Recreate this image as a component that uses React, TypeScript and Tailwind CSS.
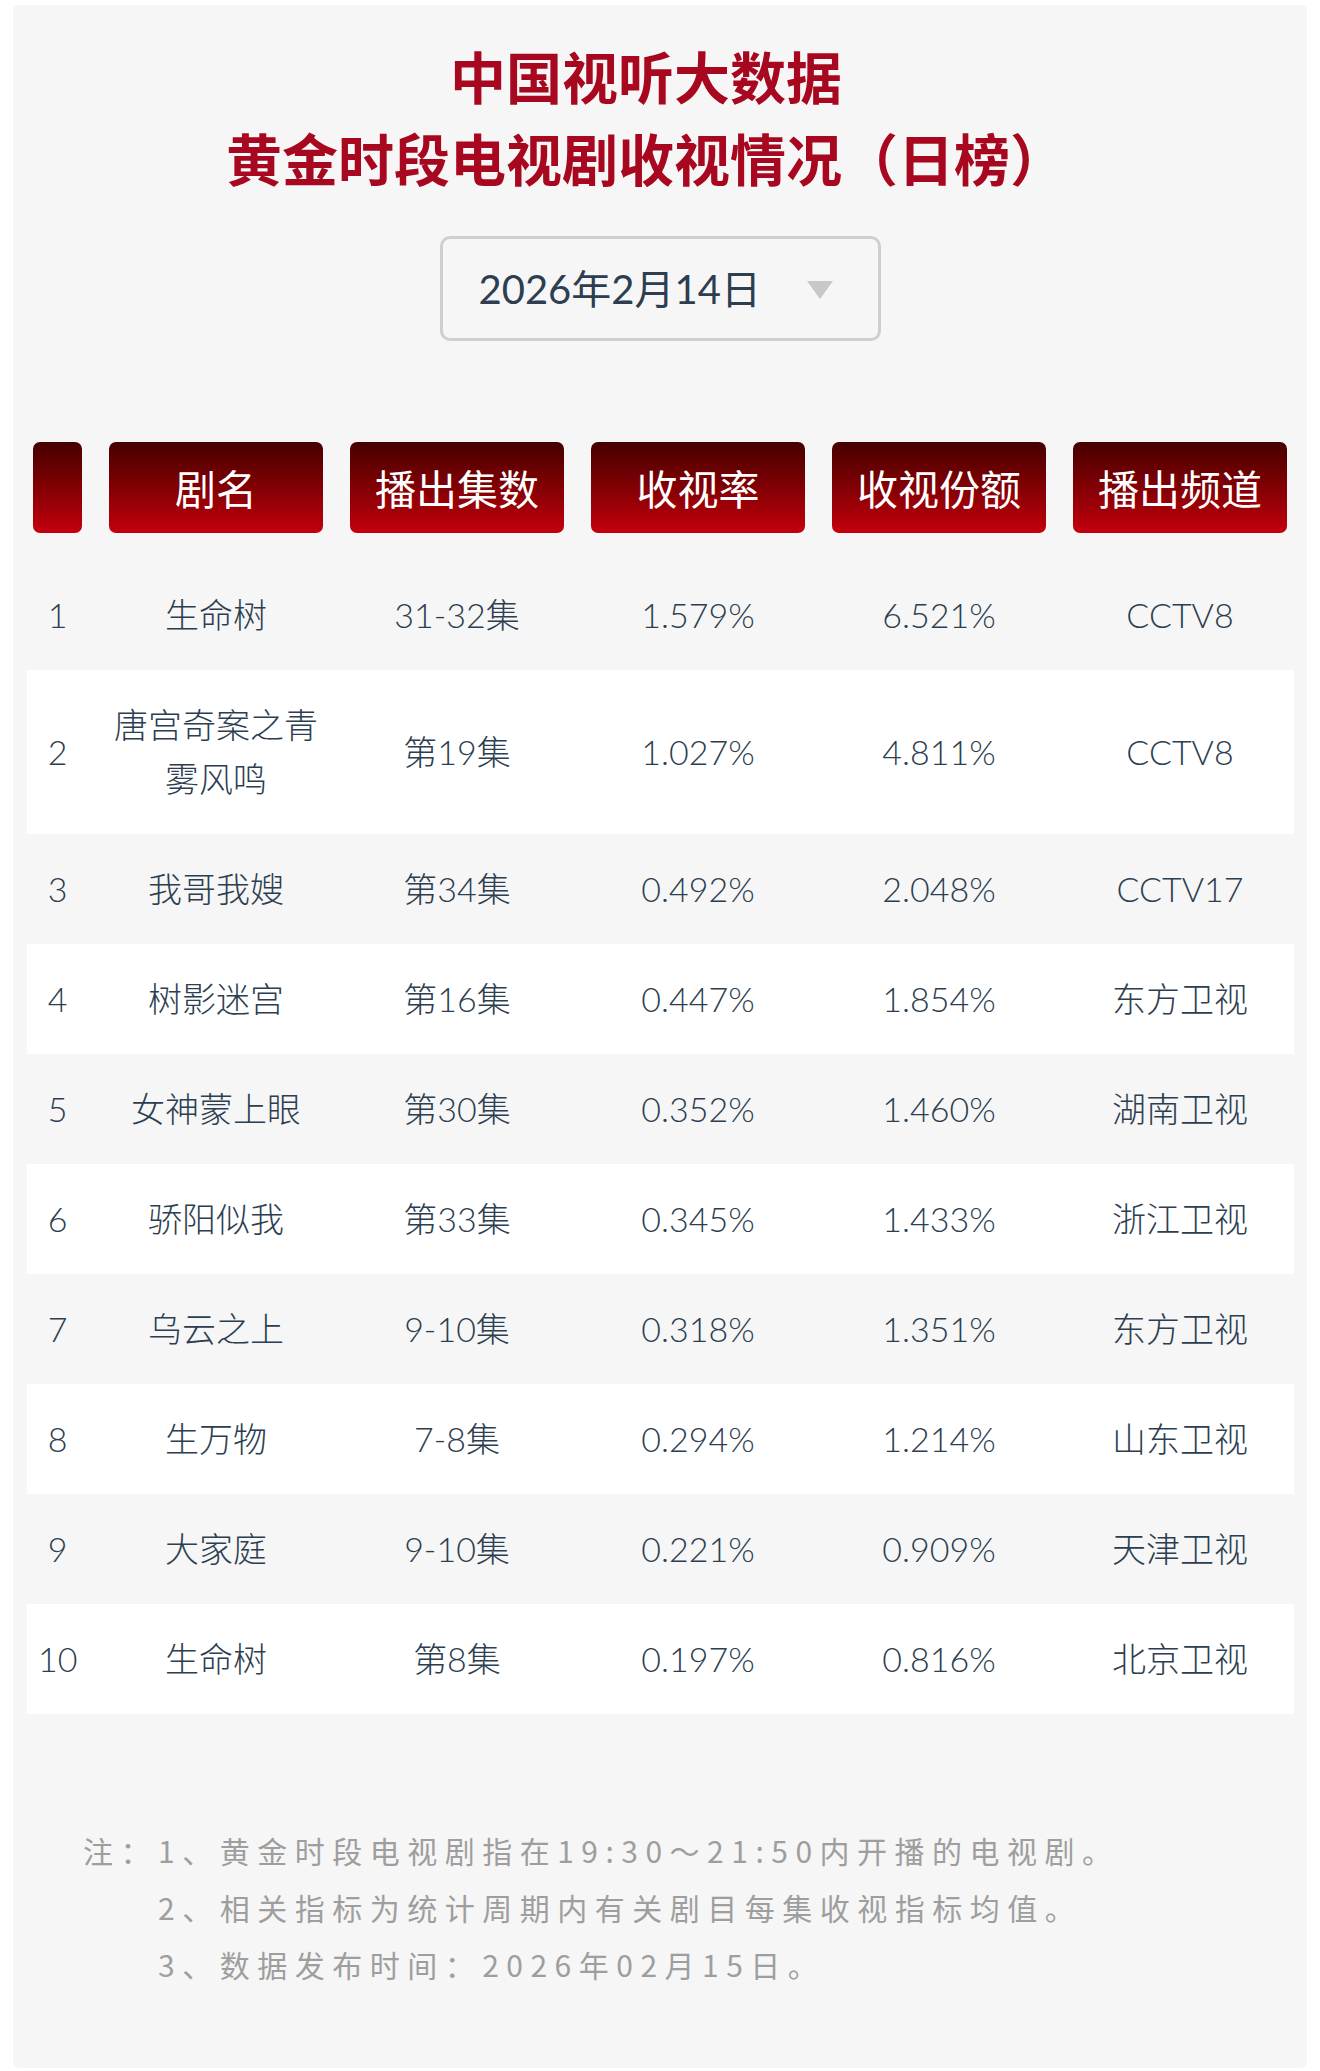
import React from "react";

const rows = [
    ["1", "生命树", "31-32集", "1.579%", "6.521%", "CCTV8"],
    ["2", "唐宫奇案之青雾风鸣", "第19集", "1.027%", "4.811%", "CCTV8"],
    ["3", "我哥我嫂", "第34集", "0.492%", "2.048%", "CCTV17"],
    ["4", "树影迷宫", "第16集", "0.447%", "1.854%", "东方卫视"],
    ["5", "女神蒙上眼", "第30集", "0.352%", "1.460%", "湖南卫视"],
    ["6", "骄阳似我", "第33集", "0.345%", "1.433%", "浙江卫视"],
    ["7", "乌云之上", "9-10集", "0.318%", "1.351%", "东方卫视"],
    ["8", "生万物", "7-8集", "0.294%", "1.214%", "山东卫视"],
    ["9", "大家庭", "9-10集", "0.221%", "0.909%", "天津卫视"],
    ["10", "生命树", "第8集", "0.197%", "0.816%", "北京卫视"],
];

const heads = ["", "剧名", "播出集数", "收视率", "收视份额", "播出频道"];

const notes = [
    "1、黄金时段电视剧指在19:30～21:50内开播的电视剧。",
    "2、相关指标为统计周期内有关剧目每集收视指标均值。",
    "3、数据发布时间：2026年02月15日。",
];

export default function App() {
    return (
        <div className="w-[1320px] h-[2071px] bg-white pt-[5px] font-['Lato','Noto_Sans_CJK_SC',sans-serif]">
            <div className="mx-[13px] h-[2063px] bg-[#f6f6f6] rounded-[6px] flex flex-col items-center">
                <h1 className="mt-[29px] pr-[28px] text-center text-[56px] leading-[82px] font-bold text-[#a8081f] font-['Noto_Sans_CJK_SC',sans-serif]">
                    中国视听大数据
                    <br />
                    黄金时段电视剧收视情况（日榜）
                </h1>

                <div className="mt-[38px] w-[441px] h-[105px] border-[3px] border-[#cfcfcf] rounded-[10px] flex items-center pl-[36px]">
                    <span className="text-[40px] text-[#2c3e50]">2026年2月14日</span>
                    <svg width="26" height="18" viewBox="0 0 26 18" className="ml-[46px] mt-[2px]">
                        <polygon points="0,0 26,0 13,18" fill="#c8c8c8" />
                    </svg>
                </div>

                {/* header */}
                <div className="self-stretch mt-[101px] ml-[20px] mr-[20px] grid grid-cols-[49px_1fr_1fr_1fr_1fr_1fr] gap-x-[27px]">
                    {heads.map((h, i) => (
                        <div
                            key={i}
                            className="h-[91px] rounded-[7px] bg-gradient-to-b from-[#460000] to-[#c4000e] flex items-center justify-center text-white text-[41px] font-['Noto_Sans_CJK_SC',sans-serif]"
                        >
                            {h}
                        </div>
                    ))}
                </div>

                {/* rows */}
                <div className="self-stretch mt-[27px] ml-[14px] mr-[13px] flex flex-col">
                    {rows.map((r, i) => (
                        <div
                            key={i}
                            className={
                                "grid grid-cols-[49px_1fr_1fr_1fr_1fr_1fr] gap-x-[27px] pl-[6px] pr-[7px] items-center py-[28px] " +
                                (i % 2 === 1 ? "bg-white" : "bg-[#f6f6f6]")
                            }
                        >
                            {r.map((c, j) => (
                                <div
                                    key={j}
                                    className="text-center text-[34px] leading-[54px] font-light text-[#2c3e50] px-[5px]"
                                >
                                    {c}
                                </div>
                            ))}
                        </div>
                    ))}
                </div>

                {/* notes */}
                <div className="self-stretch mt-[108px] ml-[70px] flex text-[30px] leading-[57px] text-[#9e9e9e] tracking-[7.5px] font-['Noto_Sans_CJK_SC',sans-serif]">
                    <span className="shrink-0">注：</span>
                    <div className="flex flex-col">
                        {notes.map((n, i) => (
                            <span key={i}>{n}</span>
                        ))}
                    </div>
                </div>
            </div>
        </div>
    );
}
